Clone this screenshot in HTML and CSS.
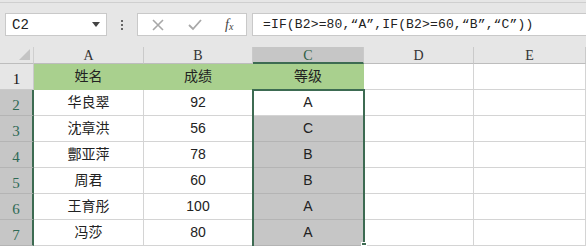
FILE: index.html
```html
<!DOCTYPE html>
<html>
<head>
<meta charset="utf-8">
<link rel="stylesheet" href="styles.css">
</head>
<body>
<div class="app">
  <div class="toolbar">
    <div class="namebox">
      <span class="name">C2</span>
      <span class="caret"></span>
    </div>
    <div class="dots"><i></i><i></i><i></i></div>
    <div class="fnbox">
      <svg class="ico" width="14" height="14" viewBox="0 0 14 14"><path d="M2 2 L12 12 M12 2 L2 12" stroke="#a8a8a8" stroke-width="1.6" fill="none"/></svg>
      <svg class="ico" width="16" height="14" viewBox="0 0 16 14"><path d="M2 7 L6 11 L14 2" stroke="#a8a8a8" stroke-width="1.8" fill="none"/></svg>
      <span class="fx">f<sub>x</sub></span>
    </div>
    <div class="formula">=IF(B2&gt;=80,“A”,IF(B2&gt;=60,“B”,“C”))</div>
  </div>
  <div class="sheet">
    <div class="corner"><span class="tri"></span></div>
    <div class="ch">A</div>
    <div class="ch">B</div>
    <div class="ch sel">C</div>
    <div class="ch">D</div>
    <div class="ch">E</div>

    <div class="rh">1</div>
    <div class="c green">姓名</div>
    <div class="c green">成绩</div>
    <div class="c green">等级</div>
    <div class="c"></div>
    <div class="c"></div>

    <div class="rh sel">2</div>
    <div class="c">华良翠</div>
    <div class="c">92</div>
    <div class="c active">A<span class="range"><span class="handle"></span></span></div>
    <div class="c"></div>
    <div class="c"></div>

    <div class="rh sel">3</div>
    <div class="c">沈章洪</div>
    <div class="c">56</div>
    <div class="c gray">C</div>
    <div class="c"></div>
    <div class="c"></div>

    <div class="rh sel">4</div>
    <div class="c">酆亚萍</div>
    <div class="c">78</div>
    <div class="c gray">B</div>
    <div class="c"></div>
    <div class="c"></div>

    <div class="rh sel">5</div>
    <div class="c">周君</div>
    <div class="c">60</div>
    <div class="c gray">B</div>
    <div class="c"></div>
    <div class="c"></div>

    <div class="rh sel">6</div>
    <div class="c">王育彤</div>
    <div class="c">100</div>
    <div class="c gray">A</div>
    <div class="c"></div>
    <div class="c"></div>

    <div class="rh sel">7</div>
    <div class="c">冯莎</div>
    <div class="c">80</div>
    <div class="c gray">A</div>
    <div class="c"></div>
    <div class="c"></div>
  </div>
</div>
</body>
</html>
```

FILE: styles.css
```css
* { box-sizing: border-box; }
html, body { margin: 0; padding: 0; }
body {
  width: 586px;
  height: 246px;
  overflow: hidden;
  background: #e6e6e6;
  font-family: "Liberation Sans", "Noto Sans CJK SC", sans-serif;
}
.app { display: flex; flex-direction: column; }
.toolbar {
  height: 45px;
  margin-top: 2px;
  border-top: 1px solid #cfcfcf;
  background: #e6e6e6;
  display: flex;
  align-items: flex-start;
  padding-top: 10px;
  padding-left: 5px;
}
.namebox {
  width: 102px;
  height: 23px;
  background: #fff;
  border: 1px solid #c9c9c9;
  display: flex;
  align-items: center;
  justify-content: space-between;
  padding: 0 6px 0 6px;
}
.name {
  font-family: "Liberation Mono", monospace;
  font-size: 14px;
  color: #222;
}
.caret {
  width: 0; height: 0;
  border-left: 4px solid transparent;
  border-right: 4px solid transparent;
  border-top: 5px solid #444;
}
.dots {
  width: 30px;
  height: 23px;
  display: flex;
  flex-direction: column;
  align-items: center;
  justify-content: center;
  gap: 2px;
}
.dots i {
  display: block;
  width: 2px; height: 2px;
  background: #666;
}
.fnbox {
  width: 110px;
  height: 23px;
  background: #fff;
  border: 1px solid #c9c9c9;
  display: flex;
  align-items: center;
  padding-left: 13px;
  gap: 22px;
}
.fx {
  font-family: "Liberation Serif", serif;
  font-style: italic;
  font-size: 14px;
  color: #444;
}
.fx sub { font-size: 10px; vertical-align: -1px; }
.formula {
  margin-left: 5px;
  flex: 1;
  height: 23px;
  background: #fff;
  border: 1px solid #c9c9c9;
  border-right: none;
  font-family: "Liberation Mono", monospace;
  font-size: 13px;
  letter-spacing: 0.15px;
  line-height: 21px;
  padding-left: 10px;
  color: #222;
  white-space: nowrap;
}
.sheet {
  display: grid;
  grid-template-columns: 34px 110px 109px 111px 110px 112px;
  grid-template-rows: 17px repeat(7, 26px);
  background: #fff;
}
.corner {
  background: #e6e6e6;
  border-right: 1px solid #cfcfcf;
  border-bottom: 1px solid #bdbdbd;
  position: relative;
}
.tri {
  position: absolute;
  right: 3px; bottom: 3px;
  width: 0; height: 0;
  border-left: 11px solid transparent;
  border-bottom: 11px solid #c4c4c4;
}
.ch {
  background: #e6e6e6;
  border-right: 1px solid #cacaca;
  border-bottom: 1px solid #bdbdbd;
  font-family: "Liberation Serif", serif;
  font-size: 14px;
  color: #333;
  text-align: center;
  line-height: 17px;
}
.ch.sel {
  background: #c6c6c6;
  color: #2e5e44;
  border-bottom: 2px solid #3d6b52;
}
.rh {
  background: #e6e6e6;
  border-right: 1px solid #cacaca;
  border-bottom: 1px solid #cacaca;
  font-family: "Liberation Serif", serif;
  font-size: 15px;
  color: #111;
  text-align: center;
  line-height: 30px;
}
.rh.sel {
  background: #c6c6c6;
  color: #2e6a55;
  border-right: 2px solid #3d6b52;
  border-bottom: 1px solid #b4b4b4;
}
.c {
  border-right: 1px solid #d4d4d4;
  border-bottom: 1px solid #d4d4d4;
  font-size: 14px;
  color: #222;
  text-align: center;
  line-height: 25px;
}
.c.green { background: #a9d08e; border-right-color: #a9d08e; border-bottom-color: #a9d08e; }
.c.gray { background: #c6c6c6; border-bottom-color: #b4b4b4; }
.c.active { position: relative; }
.range {
  position: absolute;
  left: -1px;
  top: -1px;
  width: 113px;
  height: 157px;
  border: 2px solid #3d6b52;
  border-bottom: none;
  pointer-events: none;
  z-index: 2;
}
.handle {
  position: absolute;
  right: -4px;
  bottom: 0;
  width: 6px;
  height: 4px;
  background: #3d6b52;
  border: 1px solid #fff;
}
```
